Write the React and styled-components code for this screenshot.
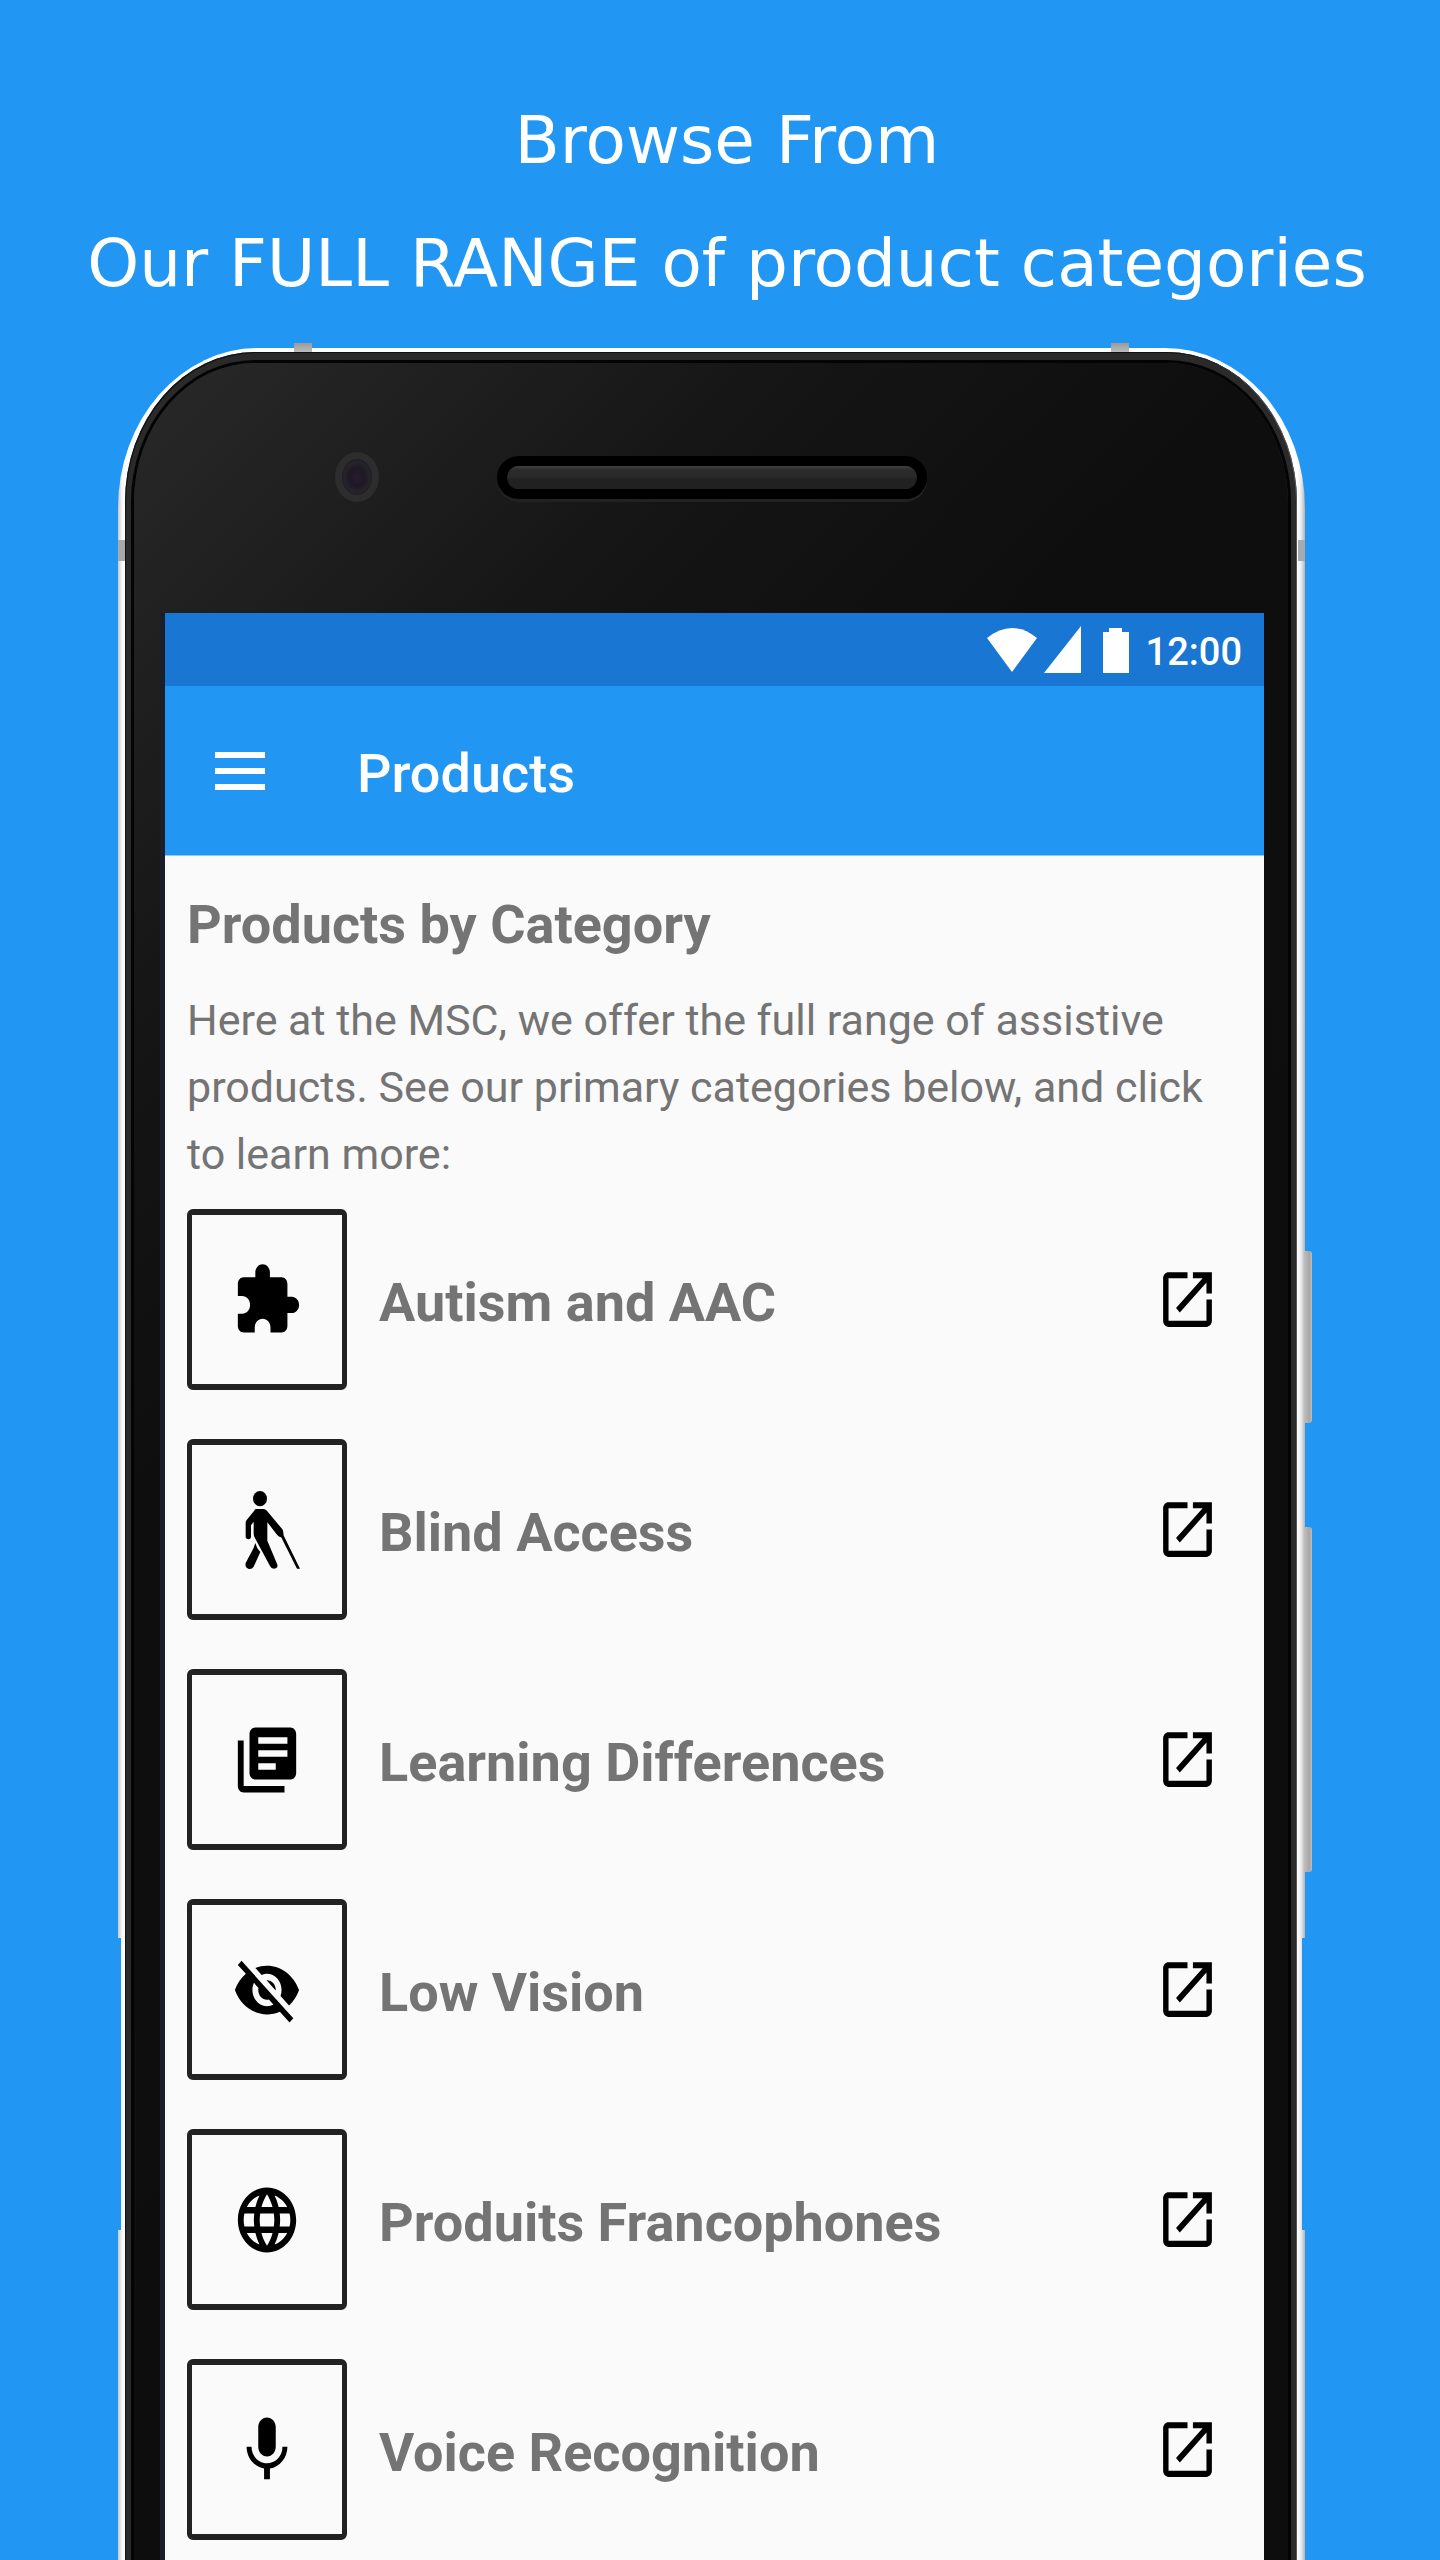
import React from "react";
import styled, { createGlobalStyle } from "styled-components";

const blue = "#2196f3";

const GlobalStyle = createGlobalStyle`
  *, *::before, *::after { box-sizing: border-box; }
  body { margin: 0; background: ${blue}; }
  h1, h2, p, ul { margin: 0; padding: 0; }
`;

const Page = styled.div`
  min-height: 100vh;
  overflow: hidden;
  background: ${blue};
  font-family: Roboto, "Liberation Sans", sans-serif;
`;

const Headline = styled.h1`
  padding: 79px 0 23px 14px;
  color: #fff;
  font: 400 66px/123px "DejaVu Sans", Verdana, sans-serif;
  text-align: center;
`;

const HeadlineRow = styled.span`
  display: block;
`;

const Phone = styled.section`
  position: relative;
  margin: 0 135px 0 118px;
  padding: 4px 8px 0 7px;
  border-radius: 140px 140px 0 0 / 160px 160px 0 0;
  background: linear-gradient(90deg, #c9c9c9 0, #f7f7f7 4px, #fff 7px, #fff calc(100% - 8px), #ececec calc(100% - 4px), #b4b4b4 100%);
`;

const Rim = styled.div`
  padding: 11px 9px 0;
  border-radius: 130px 130px 0 0 / 150px 150px 0 0;
  background: #2a2a2a;
  box-shadow: inset 1px 1px 0 #111, inset -1px 0 0 #555;
`;

const Face = styled.div`
  padding: 0 24px 0 26px;
  border-radius: 121px 121px 0 0 / 139px 139px 0 0;
  background: linear-gradient(135deg, #292929 0%, #151515 20%, #0e0e0e 34%, #0d0d0d 100%);
  box-shadow: 0 0 0 3px #040404;
`;

const SensorRow = styled.div`
  display: grid;
  grid-template-columns: 1fr 430px 1fr;
  align-items: center;
  height: 250px;
  padding-bottom: 22px;
`;

const Camera = styled.div`
  justify-self: end;
  width: 44px;
  height: 50px;
  margin-right: 118px;
  border: 7px solid #2d2d2d;
  border-radius: 50%;
  background: radial-gradient(#2a1a33 0%, #1d1924 35%, #26232b 60%, #100e14 100%);
`;

const Earpiece = styled.div`
  height: 43px;
  border: 10px solid #000;
  border-radius: 22px;
  background: linear-gradient(#414141 0, #2b2b2b 4px, #292929 11px, #212121 13px);
  box-shadow: 0 3px 0 #222;
`;

const Antenna = styled.i`
  position: absolute;
  top: -5px;
  width: 18px;
  height: 9px;
  background: linear-gradient(#999, #bbb);
  ${(p) => p.$side}: 176px;
`;

const Band = styled.i`
  position: absolute;
  top: 192px;
  width: 7px;
  height: 21px;
  background: #a9a9a9;
  ${(p) => p.$side}: 0;
`;

const Notch = styled.i`
  position: absolute;
  top: 1590px;
  width: 3px;
  height: 292px;
  background: ${blue};
  ${(p) => p.$side}: 0;
`;

const SideKey = styled.i`
  position: absolute;
  left: 100%;
  top: ${(p) => p.$top}px;
  width: 7px;
  height: ${(p) => p.$length}px;
  border-radius: 0 3px 3px 0;
  background: linear-gradient(90deg, #bbb, #a6a6a6 60%, #bcbcbc);
`;

const Screen = styled.div`
  border-left: 5px solid #1b1e28;
  background: #fafafa;
`;

const StatusBar = styled.div`
  display: flex;
  justify-content: flex-end;
  align-items: center;
  height: 73px;
  padding-right: 22px;
  background: #1976d2;
  color: #fff;
`;

const StatusIcons = styled.svg`
  width: 142px;
  height: 47px;
  margin-right: 17px;
  fill: currentColor;
`;

const Clock = styled.time`
  padding-top: 4px;
  font-size: 38px;
  font-weight: 500;
  line-height: 44px;
`;

const AppBar = styled.header`
  display: flex;
  align-items: center;
  gap: 92px;
  height: 170px;
  padding-left: 50px;
  border-bottom: 1px solid #90caf9;
  background: ${blue};
  color: #fff;
`;

const MenuButton = styled.button`
  display: flex;
  flex-direction: column;
  gap: 10px;
  width: 50px;
  padding: 0;
  border: 0;
  background: none;
  cursor: pointer;
`;

const MenuLine = styled.span`
  width: 50px;
  height: 6px;
  background: #fff;
`;

const ScreenTitle = styled.h2`
  padding-top: 6px;
  font-size: 54px;
  font-weight: 500;
  line-height: 64px;
`;

const Content = styled.main`
  padding: 34px 20px 20px 22px;
  color: #747474;
`;

const SectionTitle = styled.h2`
  font-size: 54px;
  font-weight: 700;
  line-height: 70px;
`;

const Intro = styled.p`
  margin: 27px 0 21px;
  font-size: 43px;
  line-height: 67px;
`;

const CategoryList = styled.ul`
  display: grid;
  gap: 49px;
  list-style: none;
`;

const CategoryLink = styled.a`
  display: flex;
  align-items: center;
  padding-right: 24px;
  color: inherit;
  text-decoration: none;
`;

const Tile = styled.span`
  display: flex;
  flex: none;
  align-items: center;
  justify-content: center;
  width: 160px;
  height: 181px;
  border: solid #222;
  border-width: 6px 5px;
  border-radius: 6px;
`;

const Glyph = styled.svg`
  display: block;
  width: 70px;
  height: 78px;
  fill: #000;
`;

const CategoryName = styled.span`
  flex: 1;
  padding: 6px 0 0 32px;
  font-size: 54px;
  font-weight: 700;
  line-height: 64px;
`;

const OpenGlyph = styled(Glyph)`
  width: 65px;
  height: 73px;
`;

const categories = [
  {
    name: "Autism and AAC",
    icon: <path d="M20.5 11H19V7c0-1.1-.9-2-2-2h-4V3.5C13 2.12 11.88 1 10.5 1S8 2.12 8 3.5V5H4c-1.1 0-1.99.9-1.99 2v3.8H3.5c1.49 0 2.7 1.21 2.7 2.7s-1.21 2.7-2.7 2.7H2V20c0 1.1.9 2 2 2h3.8v-1.5c0-1.49 1.21-2.7 2.7-2.7 1.49 0 2.7 1.21 2.7 2.7V22H17c1.1 0 2-.9 2-2v-4h1.5c1.38 0 2.5-1.12 2.5-2.5S21.88 11 20.5 11z" />,
  },
  {
    name: "Blind Access",
    viewBox: "246 212 210 235",
    icon: (
      <>
        <ellipse cx="330" cy="235" rx="21" ry="23" />
        <path d="M318 266h23q5 0 9 5l46 55q4 5 4 12l1 8 49 100h-9l-47-94q-8-1-13-8l-29-38v56l29 69q4 9-3 14-12 5-18-7l-46-86q-3-5-3-12v-35l-8 10v35q0 7-8 7t-8-7v-43q0-4 3-8l22-27q3-6 6-6z" />
        <path d="M316 369q4 17 15 27l-20 44q-6 9-16 6-11-4-8-17l23-44z" />
      </>
    ),
  },
  {
    name: "Learning Differences",
    icon: <path d="M4 6H2v14c0 1.100.9 2 2 2h14v-2H4V6zm16-4H8c-1.100 0-2 .9-2 2v12c0 1.100.9 2 2 2h12c1.100 0 2-.9 2-2V4c0-1.100-.9-2-2-2zm-1 9H9V9h10v2zm-4 4H9v-2h6v2zm4-8H9V5h10v2z" />,
  },
  {
    name: "Low Vision",
    icon: <path d="M12 7c2.760 0 5 2.240 5 5 0 .65-.13 1.260-.36 1.830l2.920 2.920c1.510-1.260 2.700-2.890 3.430-4.750-1.730-4.390-6-7.500-11-7.500-1.400 0-2.740.25-3.980.7l2.160 2.160C10.740 7.130 11.350 7 12 7zM2 4.270l2.280 2.280.46.46C3.080 8.300 1.780 10.020 1 12c1.730 4.390 6 7.500 11 7.500 1.550 0 3.030-.3 4.380-.84l.42.42L19.730 22 21 20.730 3.270 3 2 4.270zM7.530 9.800l1.550 1.550c-.05.21-.08.43-.08.65 0 1.660 1.340 3 3 3 .22 0 .44-.03.65-.08l1.550 1.550c-.67.33-1.410.53-2.200.53-2.760 0-5-2.240-5-5 0-.79.2-1.530.53-2.200zm4.310-.78l3.150 3.150.02-.16c0-1.660-1.340-3-3-3l-.17.01z" />,
  },
  {
    name: "Produits Francophones",
    icon: <path d="M11.990 2C6.470 2 2 6.480 2 12s4.470 10 9.990 10C17.520 22 22 17.520 22 12S17.520 2 11.990 2zm6.930 6h-2.950c-.32-1.250-.78-2.450-1.380-3.560 1.840.63 3.370 1.910 4.330 3.560zM12 4.040c.83 1.200 1.480 2.530 1.910 3.960h-3.820c.43-1.430 1.080-2.760 1.910-3.960zM4.260 14C4.100 13.360 4 12.690 4 12s.1-1.360.26-2h3.380c-.08.66-.14 1.320-.14 2s.06 1.340.14 2H4.260zm.82 2h2.950c.32 1.250.78 2.450 1.380 3.560-1.840-.63-3.370-1.900-4.330-3.560zm2.950-8H5.080c.96-1.660 2.490-2.930 4.330-3.560C8.810 5.550 8.350 6.750 8.030 8zM12 19.960c-.83-1.200-1.480-2.530-1.910-3.960h3.820c-.43 1.430-1.080 2.760-1.910 3.960zM14.340 14H9.660c-.09-.66-.16-1.320-.16-2s.07-1.350.16-2h4.680c.09.65.16 1.320.16 2s-.07 1.340-.16 2zm.25 5.560c.6-1.110 1.060-2.310 1.380-3.560h2.950c-.96 1.650-2.490 2.930-4.330 3.560zM16.360 14c.08-.66.14-1.320.14-2s-.06-1.340-.14-2h3.380c.16.64.26 1.310.26 2s-.1 1.360-.26 2h-3.380z" />,
  },
  {
    name: "Voice Recognition",
    icon: <path d="M12 14c1.660 0 2.990-1.340 2.990-3L15 5c0-1.660-1.340-3-3-3S9 3.340 9 5v6c0 1.660 1.340 3 3 3zm5.300-3c0 3-2.540 5.100-5.300 5.100S6.700 14 6.700 11H5c0 3.410 2.720 6.230 6 6.720V21h2v-3.280c3.280-.48 6-3.300 6-6.720h-1.700z" />,
  },
];

export default function App() {
  return (
    <Page>
      <GlobalStyle />
      <Headline>
        <HeadlineRow>Browse From</HeadlineRow>
        <HeadlineRow>Our FULL RANGE of product categories</HeadlineRow>
      </Headline>
      <Phone>
        <Antenna $side="left" />
        <Antenna $side="right" />
        <Band $side="left" />
        <Band $side="right" />
        <Notch $side="left" />
        <Notch $side="right" />
        <SideKey $top={903} $length={172} />
        <SideKey $top={1179} $length={345} />
        <Rim>
          <Face>
            <SensorRow>
              <Camera />
              <Earpiece />
            </SensorRow>
            <Screen>
              <StatusBar>
                <StatusIcons viewBox="0 0 142 47" aria-hidden="true">
                  <path d="M0 12Q25-8 50 12L25 46z" />
                  <path d="M57 47H94V0z" />
                  <path d="M116 6h6V2h13v4h7v41h-26z" />
                </StatusIcons>
                <Clock>12:00</Clock>
              </StatusBar>
              <AppBar>
                <MenuButton type="button" aria-label="Open menu">
                  <MenuLine />
                  <MenuLine />
                  <MenuLine />
                </MenuButton>
                <ScreenTitle>Products</ScreenTitle>
              </AppBar>
              <Content>
                <SectionTitle>Products by Category</SectionTitle>
                <Intro>
                  Here at the MSC, we offer the full range of assistive products. See our
                  primary categories below, and click to learn more:
                </Intro>
                <CategoryList>
                  {categories.map(({ name, icon, viewBox = "0 0 24 24" }) => (
                    <li key={name}>
                      <CategoryLink href="#">
                        <Tile>
                          <Glyph viewBox={viewBox} preserveAspectRatio="none" aria-hidden="true">
                            {icon}
                          </Glyph>
                        </Tile>
                        <CategoryName>{name}</CategoryName>
                        <OpenGlyph viewBox="0 0 24 24" preserveAspectRatio="none" aria-hidden="true">
                          <path d="M19 19H5V5h7V3H5c-1.110 0-2 .9-2 2v14c0 1.100.89 2 2 2h14c1.100 0 2-.9 2-2v-7h-2v7zM14 3v2h3.590l-9.830 9.830 1.410 1.410L19 6.410V10h2V3h-7z" />
                        </OpenGlyph>
                      </CategoryLink>
                    </li>
                  ))}
                </CategoryList>
              </Content>
            </Screen>
          </Face>
        </Rim>
      </Phone>
    </Page>
  );
}
